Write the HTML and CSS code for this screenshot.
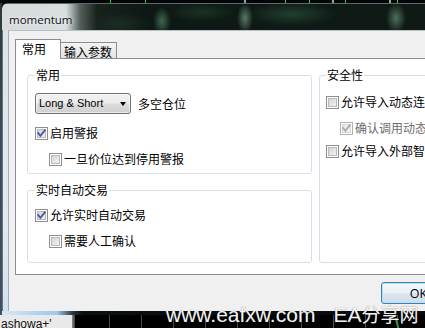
FILE: index.html
```html
<!DOCTYPE html>
<html lang="zh-CN">
<head>
<meta charset="utf-8">
<title>momentum</title>
<link rel="stylesheet" href="styles.css">
</head>
<body>
<div class="screen">
  <div class="chart-top"></div>
  <div class="stage">
    <div class="desk-edge"></div>
    <div class="window">
      <div class="titlebar"><span class="title">momentum</span></div>
      <div class="win-body">
        <div class="frame-left"></div>
        <div class="client">
          <div class="tabs">
            <div class="tab active">常用</div>
            <div class="tab">输入参数</div>
          </div>
          <div class="panel">
            <div class="columns">
              <div class="col-left">
                <fieldset class="group g1">
                  <legend>常用</legend>
                  <div class="combo-row">
                    <div class="combo"><span class="combo-text">Long &amp; Short</span><span class="arrow"></span></div>
                    <span class="combo-label">多空仓位</span>
                  </div>
                  <div class="opt r1"><span class="cb"><svg viewBox="0 0 11 11" width="11" height="11"><path class="tick" d="M2.2 5.2 L4.4 7.8 L8.8 2.4"/></svg></span><span>启用警报</span></div>
                  <div class="opt r2 indent"><span class="cb"></span><span>一旦价位达到停用警报</span></div>
                </fieldset>
                <fieldset class="group g2">
                  <legend>实时自动交易</legend>
                  <div class="opt r1"><span class="cb"><svg viewBox="0 0 11 11" width="11" height="11"><path class="tick" d="M2.2 5.2 L4.4 7.8 L8.8 2.4"/></svg></span><span>允许实时自动交易</span></div>
                  <div class="opt r2 indent"><span class="cb"></span><span>需要人工确认</span></div>
                </fieldset>
              </div>
              <fieldset class="group g3">
                <legend>安全性</legend>
                <div class="opt r1"><span class="cb"></span><span>允许导入动态连接库</span></div>
                <div class="opt r2 indent disabled"><span class="cb"><svg viewBox="0 0 11 11" width="11" height="11"><path class="tick" d="M2.2 5.2 L4.4 7.8 L8.8 2.4"/></svg></span><span>确认调用动态连接库函数</span></div>
                <div class="opt r3"><span class="cb"></span><span>允许导入外部智能交易</span></div>
              </fieldset>
            </div>
          </div>
          <div class="footer"><button class="btn">OK</button></div>
        </div>
      </div>
      <div class="frame-bottom"></div>
    </div>
  </div>
  <div class="chart-bottom">
    <div class="nav-cell">ashowa+'</div>
    <div class="nav-sep"></div>
    <div class="chart-grid"><span class="chart-line"></span></div>
  </div>
  <div class="watermark">www.eafxw.com<span class="wm-gap"></span>EA<span class="wm-cjk">分享网</span></div>
</div>
</body>
</html>
```
FILE: styles.css
```css
html, body {
  margin: 0;
  padding: 0;
  background: #000;
}
.screen {
  position: relative;
  width: 425px;
  height: 328px;
  overflow: hidden;
  background: #050808;
  font-family: "Noto Sans CJK SC", "Liberation Sans", sans-serif;
  font-size: 12px;
  color: #000;
}
.chart-top {
  height: 3px;
  background:
    linear-gradient(#39c846, #39c846) 110px 0 / 1px 3px no-repeat,
    linear-gradient(#39c846, #39c846) 145px 0 / 1px 3px no-repeat,
    linear-gradient(#9aa09a, #9aa09a) 244px 0 / 2px 3px no-repeat,
    linear-gradient(#39c846, #39c846) 285px 0 / 1px 3px no-repeat,
    linear-gradient(#39c846, #39c846) 309px 0 / 1px 3px no-repeat,
    linear-gradient(#9aa09a, #9aa09a) 332px 0 / 2px 3px no-repeat,
    linear-gradient(#39c846, #39c846) 345px 0 / 1px 3px no-repeat,
    linear-gradient(#9aa09a, #9aa09a) 389px 0 / 2px 3px no-repeat,
    linear-gradient(#39c846, #39c846) 397px 0 / 1px 3px no-repeat,
    #040605;
}
.stage {
  display: flex;
  height: 312px;
}
.desk-edge {
  width: 2px;
  flex-shrink: 0;
  background: linear-gradient(#2c3a34, #3c4a58 40%, #44505c);
}
.window {
  width: 440px;
  flex-shrink: 0;
  display: flex;
  flex-direction: column;
  border-radius: 6px 0 0 0;
  overflow: hidden;
}
.titlebar {
  height: 27px;
  box-sizing: border-box;
  padding: 6px 0 0 7px;
  background:
    radial-gradient(9px 14px at 160px 17px, rgba(110, 180, 140, 0.5), rgba(110, 180, 140, 0)),
    radial-gradient(8px 15px at 243px 14px, rgba(150, 200, 170, 0.55), rgba(150, 200, 170, 0)),
    radial-gradient(10px 15px at 394px 14px, rgba(140, 195, 165, 0.5), rgba(140, 195, 165, 0)),
    radial-gradient(45px 12px at 290px 10px, rgba(55, 110, 80, 0.45), rgba(55, 110, 80, 0)),
    radial-gradient(35px 10px at 200px 8px, rgba(40, 90, 60, 0.4), rgba(40, 90, 60, 0)),
    radial-gradient(30px 12px at 120px 20px, rgba(40, 80, 55, 0.35), rgba(40, 80, 55, 0)),
    linear-gradient(to right, #d6dbde 0, #d9dee0 64px, #55605b 78px, #17221d 95px, #0e1814 140px, #0f1a15 100%);
  border-top: 1px solid #5d6a70;
}
.title {
  font-family: "Open Sans", "Liberation Sans", sans-serif;
  font-size: 11.5px;
  line-height: 14px;
  color: #111;
  text-shadow: 0 0 4px #fff;
}
.win-body {
  display: flex;
  height: 281px;
}
.frame-left {
  width: 6px;
  flex-shrink: 0;
  box-sizing: border-box;
  border-left: 1px solid #66737d;
  background: linear-gradient(#dde4e9, #e2eaf0 70%, #cfe2f2);
}
.client {
  flex: 1;
  box-sizing: border-box;
  border-top: 1px solid #b9c1c7;
  border-left: 1px solid #a3adb5;
  background: #f0f0f0;
  padding: 8px 0 0 6px;
}
.tabs {
  display: flex;
  align-items: flex-end;
  height: 19px;
}
.tab {
  box-sizing: border-box;
  height: 16px;
  width: 56px;
  border: 1px solid #898c95;
  border-bottom: none;
  border-left: none;
  background: linear-gradient(#f4f4f4, #e3e3e3);
  line-height: 14px;
  padding: 2px 0 0 3px;
  white-space: nowrap;
}
.tab.active {
  position: relative;
  z-index: 1;
  width: 46px;
  height: 20px;
  margin-bottom: -1px;
  border-left: 1px solid #898c95;
  background: #fff;
  line-height: 18px;
  padding: 0 0 0 6px;
}
.panel {
  box-sizing: border-box;
  height: 217px;
  border: 1px solid #898c95;
  border-right: none;
  background: #fff;
  padding: 8px 0 0 11px;
}
.columns {
  display: flex;
  gap: 7px;
  height: 196px;
}
.col-left {
  display: flex;
  flex-direction: column;
  gap: 8px;
  width: 285px;
}
.group {
  margin: 0;
  min-width: 0;
  box-sizing: border-box;
  border: 1px solid #d5dfe5;
  border-radius: 3px;
  padding: 0 7px;
}
.group legend {
  padding: 0 1px;
  line-height: 16px;
  height: 16px;
}
.g1 { padding-bottom: 6px; }
.g2 { padding-bottom: 13px; }
.g3 {
  width: 130px;
  padding: 0 6px;
}
.combo-row {
  display: flex;
  align-items: center;
  margin-top: 10px;
  height: 21px;
}
.combo {
  box-sizing: border-box;
  width: 96px;
  height: 21px;
  border: 1px solid #707070;
  border-radius: 3px;
  background: linear-gradient(#f2f2f2 0, #ebebeb 48%, #dddddd 52%, #cfcfcf 100%);
  box-shadow: inset 0 0 0 1px rgba(255, 255, 255, 0.6);
  display: flex;
  align-items: center;
  justify-content: space-between;
  padding: 0 4px 0 3px;
}
.combo-text {
  font-family: "Liberation Sans", sans-serif;
  font-size: 11px;
  line-height: 13px;
  white-space: nowrap;
}
.arrow {
  width: 0;
  height: 0;
  border-top: 4px solid #000;
  border-left: 3.5px solid transparent;
  border-right: 3.5px solid transparent;
}
.combo-label {
  margin-left: 7px;
  line-height: 16px;
}
.opt {
  display: flex;
  align-items: center;
  gap: 2px;
  height: 16px;
  line-height: 16px;
  white-space: nowrap;
}
.opt.indent { margin-left: 14px; }
.g1 .r1 { margin-top: 11px; }
.g1 .r2 { margin-top: 10px; }
.g2 .r1 { margin-top: 9px; }
.g2 .r2 { margin-top: 10px; }
.g3 .r1 { margin-top: 11px; }
.g3 .r2 { margin-top: 10px; }
.g3 .r3 { margin-top: 7px; }
.cb {
  flex-shrink: 0;
  width: 13px;
  height: 13px;
  box-sizing: border-box;
  border: 1px solid #8e8f8f;
  background: linear-gradient(135deg, #c9cdd2 0, #e4e6e8 55%, #f7f7f7 100%);
  box-shadow: inset 0 0 0 1px #fff, inset 0 0 0 2px #b7bbc0;
}
.cb svg {
  display: block;
}
.tick {
  fill: none;
  stroke: #4a5f98;
  stroke-width: 1.9;
  stroke-linecap: square;
}
.disabled {
  color: #6d6d6d;
}
.disabled .cb {
  border-color: #b1b1b1;
  background: linear-gradient(135deg, #e6e7e9, #f6f6f6);
  box-shadow: inset 0 0 0 1px #fff, inset 0 0 0 2px #d4d6d9;
}
.disabled .tick {
  stroke: #a6adb4;
}
.footer {
  height: 36px;
  box-sizing: border-box;
  padding: 7px 0 0 366px;
}
.btn {
  display: block;
  box-sizing: border-box;
  width: 75px;
  height: 22px;
  margin: 0;
  padding: 0;
  border: 1px solid #3c7fb1;
  border-radius: 3px;
  background: linear-gradient(#f2f7fb 0, #eaf1f7 48%, #dbe6ef 52%, #cfdce8 100%);
  box-shadow: inset 0 0 0 1px #b6e2f7;
  font-family: "Open Sans", "Liberation Sans", sans-serif;
  font-size: 12.5px;
  line-height: 19px;
  color: #000;
  text-align: center;
}
.frame-bottom {
  height: 4px;
  background: linear-gradient(to right, #d8e8f4 0, #b4d6f2 30px, #a3c8e8 55px, #2c3b45 70px, #0b1012 80px, #070a0b 100%);
}
.chart-bottom {
  display: flex;
  height: 13px;
}
.nav-cell {
  width: 72px;
  flex-shrink: 0;
  box-sizing: border-box;
  background: #e9e9e9;
  font-family: "Liberation Sans", sans-serif;
  font-size: 12px;
  line-height: 14px;
  padding: 2px 0 0 1px;
  color: #111;
  overflow: hidden;
  white-space: nowrap;
}
.nav-sep {
  width: 3px;
  flex-shrink: 0;
  background: linear-gradient(to right, #8d8d8d, #3b3b3b);
}
.chart-grid {
  position: relative;
  flex: 1;
  background:
    repeating-linear-gradient(to right, rgba(0,0,0,0) 0 31px, #4a4a4a 31px 32px) 3px 0 / auto 100%,
    #000;
}
.chart-line {
  position: absolute;
  left: 321px;
  top: 3px;
  width: 2px;
  height: 10px;
  background: #2e9a48;
  transform: skewX(15deg);
}
.watermark {
  position: absolute;
  left: 166px;
  top: 304px;
  font-family: "Liberation Sans", "Noto Sans CJK SC", sans-serif;
  font-size: 21px;
  line-height: 21px;
  color: rgba(255, 255, 255, 0.96);
  text-shadow: 0 0 1px rgba(60, 60, 60, 0.8);
  white-space: nowrap;
}
.wm-gap {
  display: inline-block;
  width: 18px;
}
.wm-cjk {
  font-size: 19px;
}
```
